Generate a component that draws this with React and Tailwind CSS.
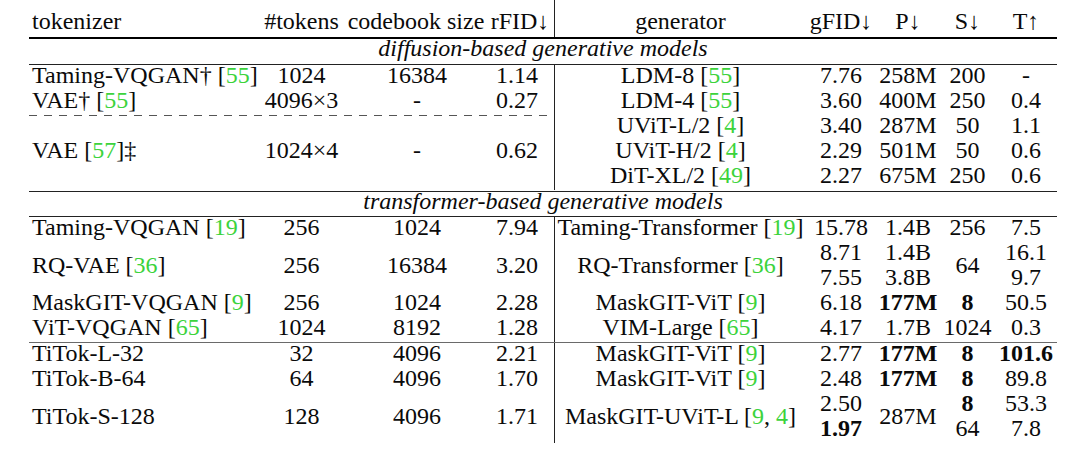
const COL = ['', 'col-start-1', 'col-start-2', 'col-start-3', 'col-start-4', 'col-start-5', 'col-start-6', 'col-start-7', 'col-start-8', 'col-start-9'];
const ROW = ['', 'row-start-1', 'row-start-2', 'row-start-3', 'row-start-4', 'row-start-5'];
const SPAN = ['', '', 'row-span-2', 'row-span-3'];

const GRID = 'grid grid-cols-[234px_77px_154px_60px_252px_70px_64px_55px_62px]';

function Ref({ children }) {
  return <span className="text-[#3cd33c]">{children}</span>;
}

function Cell({ c, r, span = 1, bold = false, children }) {
  const align = c === 1 ? 'justify-start pl-[3px]' : 'justify-center';
  const extra = c === 4 ? 'pr-[14px]' : c === 5 ? 'border-l border-[#222]' : '';
  return (
    <div
      className={`${COL[c]} ${ROW[r]} ${SPAN[span]} flex items-center pb-[4px] whitespace-nowrap ${align} ${extra} ${
        bold ? 'font-bold' : ''
      }`}
    >
      <span>{children}</span>
    </div>
  );
}

// one row of plain cells: [tokenizer, tokens, codebook, rFID, generator, gFID, P, S, T]
function Row({ r, cells, bold = [] }) {
  return cells.map((v, i) =>
    v === null ? null : (
      <Cell key={i} c={i + 1} r={r} bold={bold.includes(i + 1)}>
        {v}
      </Cell>
    )
  );
}

function Section({ children }) {
  return (
    <div className="h-[25px] flex items-center justify-center pb-[6px] italic whitespace-nowrap">
      {children}
    </div>
  );
}

export default function App() {
  return (
    <div className="w-[1080px] h-[449px] bg-white overflow-hidden">
      <div className="ml-[29px] w-[1028px] [font-family:'Liberation_Serif','Times_New_Roman',serif] text-[24px] leading-[25px] text-[#0a0a0a]">
        {/* header */}
        <div className={`${GRID} h-[37px]`}>
          {['tokenizer', '#tokens', 'codebook size', 'rFID↓', 'generator', 'gFID↓', 'P↓', 'S↓', 'T↑'].map((h, i) => (
            <div
              key={h}
              className={`flex items-center pt-[6px] whitespace-nowrap ${i === 0 ? 'justify-start pl-[3px]' : 'justify-center'} ${
                i === 3 ? 'pl-[4px] pr-[12px]' : ''
              } ${i === 2 ? 'pr-[2px]' : ''} ${i === 4 ? 'border-l border-[#222]' : ''}`}
            >
              <span>{h}</span>
            </div>
          ))}
        </div>
        <div className="h-[2px] bg-black" />

        <Section>diffusion-based generative models</Section>
        <div className="h-px bg-[#222]" />

        <div className={`${GRID} grid-rows-[25px_25px_25px_25px_25px] pb-px`}>
          <Row r={1} cells={[<>Taming-VQGAN† [<Ref>55</Ref>]</>, '1024', '16384', '1.14', <>LDM-8 [<Ref>55</Ref>]</>, '7.76', '258M', '200', '-']} />
          <Row r={2} cells={[<>VAE† [<Ref>55</Ref>]</>, '4096×3', '-', '0.27', <>LDM-4 [<Ref>55</Ref>]</>, '3.60', '400M', '250', '0.4']} />
          <div className="col-start-1 col-span-4 row-start-3 self-start h-px bg-[repeating-linear-gradient(to_right,#555_0px,#555_8px,transparent_8px,transparent_15px)]" />
          <Cell c={1} r={3} span={3}>VAE [<Ref>57</Ref>]‡</Cell>
          <Cell c={2} r={3} span={3}>1024×4</Cell>
          <Cell c={3} r={3} span={3}>-</Cell>
          <Cell c={4} r={3} span={3}>0.62</Cell>
          <Row r={3} cells={[null, null, null, null, <>UViT-L/2 [<Ref>4</Ref>]</>, '3.40', '287M', '50', '1.1']} />
          <Row r={4} cells={[null, null, null, null, <>UViT-H/2 [<Ref>4</Ref>]</>, '2.29', '501M', '50', '0.6']} />
          <Row r={5} cells={[null, null, null, null, <>DiT-XL/2 [<Ref>49</Ref>]</>, '2.27', '675M', '250', '0.6']} />
        </div>
        <div className="h-px bg-[#222]" />

        <div className="h-[24px] flex items-center justify-center pb-[5px] italic whitespace-nowrap">
          transformer-based generative models
        </div>
        <div className="h-px bg-[#222]" />

        <div className={`${GRID} grid-rows-[25px_25px_25px_25px_25px]`}>
          <Row r={1} cells={[<>Taming-VQGAN [<Ref>19</Ref>]</>, '256', '1024', '7.94', <>Taming-Transformer [<Ref>19</Ref>]</>, '15.78', '1.4B', '256', '7.5']} />
          <Cell c={1} r={2} span={2}>RQ-VAE [<Ref>36</Ref>]</Cell>
          <Cell c={2} r={2} span={2}>256</Cell>
          <Cell c={3} r={2} span={2}>16384</Cell>
          <Cell c={4} r={2} span={2}>3.20</Cell>
          <Cell c={5} r={2} span={2}>RQ-Transformer [<Ref>36</Ref>]</Cell>
          <Cell c={8} r={2} span={2}>64</Cell>
          <Row r={2} cells={[null, null, null, null, null, '8.71', '1.4B', null, '16.1']} />
          <Row r={3} cells={[null, null, null, null, null, '7.55', '3.8B', null, '9.7']} />
          <Row r={4} cells={[<>MaskGIT-VQGAN [<Ref>9</Ref>]</>, '256', '1024', '2.28', <>MaskGIT-ViT [<Ref>9</Ref>]</>, '6.18', '177M', '8', '50.5']} bold={[7, 8]} />
          <Row r={5} cells={[<>ViT-VQGAN [<Ref>65</Ref>]</>, '1024', '8192', '1.28', <>VIM-Large [<Ref>65</Ref>]</>, '4.17', '1.7B', '1024', '0.3']} />
        </div>
        <div className="h-px bg-[#6a6a6a]" />

        <div className={`${GRID} grid-rows-[25px_25px_25px_25px]`}>
          <Row r={1} cells={['TiTok-L-32', '32', '4096', '2.21', <>MaskGIT-ViT [<Ref>9</Ref>]</>, '2.77', '177M', '8', '101.6']} bold={[7, 8, 9]} />
          <Row r={2} cells={['TiTok-B-64', '64', '4096', '1.70', <>MaskGIT-ViT [<Ref>9</Ref>]</>, '2.48', '177M', '8', '89.8']} bold={[7, 8]} />
          <Cell c={1} r={3} span={2}>TiTok-S-128</Cell>
          <Cell c={2} r={3} span={2}>128</Cell>
          <Cell c={3} r={3} span={2}>4096</Cell>
          <Cell c={4} r={3} span={2}>1.71</Cell>
          <Cell c={5} r={3} span={2}>MaskGIT-UViT-L [<Ref>9</Ref>, <Ref>4</Ref>]</Cell>
          <Cell c={7} r={3} span={2}>287M</Cell>
          <Row r={3} cells={[null, null, null, null, null, '2.50', null, '8', '53.3']} bold={[8]} />
          <Row r={4} cells={[null, null, null, null, null, '1.97', null, '64', '7.8']} bold={[6]} />
        </div>
      </div>
    </div>
  );
}
